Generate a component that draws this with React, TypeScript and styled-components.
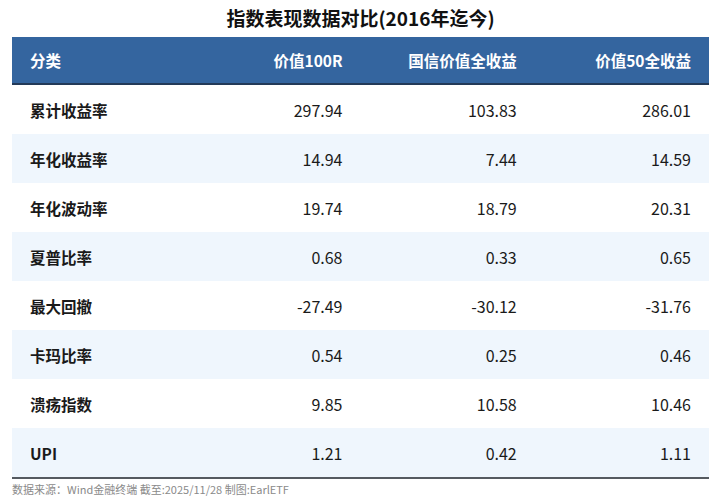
import React from "react";
import styled, { createGlobalStyle } from "styled-components";

const GlobalStyle = createGlobalStyle`
  html, body {
    margin: 0;
    padding: 0;
    background: #ffffff;
  }

  body {
    font-family: "Noto Sans CJK SC", "Noto Sans", sans-serif;
  }
`;

const Page = styled.div`
  width: 720px;
  height: 502px;
  padding: 0 11px 0 12px;
  box-sizing: border-box;
  display: flex;
  flex-direction: column;
`;

const Title = styled.h1`
  margin: 0;
  height: 37px;
  line-height: 36px;
  text-align: center;
  font-size: 19px;
  font-weight: 700;
  color: #111111;
`;

const Table = styled.div`
  display: flex;
  flex-direction: column;
  border-bottom: 2px solid #555a60;
`;

const Row = styled.div<{ $head?: boolean; $alt?: boolean }>`
  display: grid;
  grid-template-columns: repeat(4, 1fr);
  height: ${(p) => (p.$head ? "46px" : "49px")};
  align-items: center;
  background: ${(p) => (p.$head ? "#34659f" : p.$alt ? "#eff6fd" : "#ffffff")};
  border-bottom: ${(p) => (p.$head ? "2px solid #233a58" : "none")};
  color: ${(p) => (p.$head ? "#ffffff" : "#1a1a1a")};
  font-size: 15.5px;
`;

const Cell = styled.div<{ $label?: boolean; $head?: boolean }>`
  padding: 0 18px;
  text-align: ${(p) => (p.$label ? "left" : "right")};
  font-weight: ${(p) => (p.$label || p.$head ? 700 : 400)};
  font-size: ${(p) => (p.$label || p.$head ? "15.5px" : "16px")};
  white-space: nowrap;
`;

const Footer = styled.div`
  padding-top: 2px;
  font-size: 11px;
  color: #8a8a8a;
`;

type Metric = {
    name: string;
    values: string[];
};

const headers = ["价值100R", "国信价值全收益", "价值50全收益"];

const metrics: Metric[] = [
    { name: "累计收益率", values: ["297.94", "103.83", "286.01"] },
    { name: "年化收益率", values: ["14.94", "7.44", "14.59"] },
    { name: "年化波动率", values: ["19.74", "18.79", "20.31"] },
    { name: "夏普比率", values: ["0.68", "0.33", "0.65"] },
    { name: "最大回撤", values: ["-27.49", "-30.12", "-31.76"] },
    { name: "卡玛比率", values: ["0.54", "0.25", "0.46"] },
    { name: "溃疡指数", values: ["9.85", "10.58", "10.46"] },
    { name: "UPI", values: ["1.21", "0.42", "1.11"] },
];

const App: React.FC = () => {
    return <>
        <GlobalStyle/>
        <Page>
            <Title>指数表现数据对比(2016年迄今)</Title>

            <Table>
                <Row $head>
                    <Cell $label>分类</Cell>
                    {headers.map((h) => <Cell key={h} $head>{h}</Cell>)}
                </Row>

                {metrics.map((m, i) => (
                    <Row key={m.name} $alt={i % 2 === 1}>
                        <Cell $label>{m.name}</Cell>
                        {m.values.map((v, j) => <Cell key={j}>{v}</Cell>)}
                    </Row>
                ))}
            </Table>

            <Footer>数据来源：Wind金融终端 截至:2025/11/28 制图:EarlETF</Footer>
        </Page>
    </>
}

export default App;
